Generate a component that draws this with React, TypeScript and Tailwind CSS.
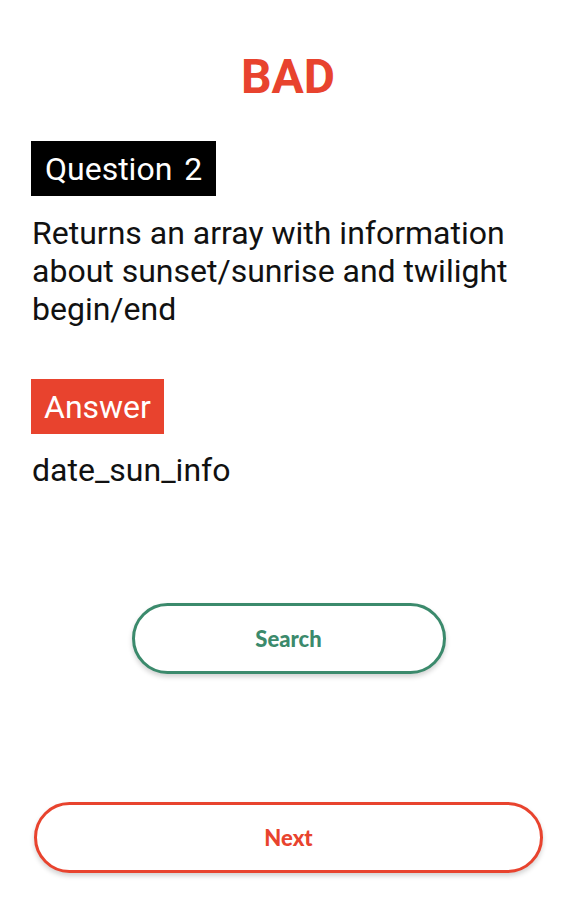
import React from "react";

export default function App() {
  return (
    <div className="w-[573px] h-[900px] bg-white flex flex-col px-[31px]" style={{ fontFamily: "Roboto, 'Liberation Sans', sans-serif" }}>
      <h1 className="pt-[49px] text-center text-[48px] leading-[56px] font-bold text-[#e8432e] pl-[3px]">BAD</h1>
      <div className="mt-[36px] self-start h-[55px] bg-black text-white text-[32px] flex items-center px-[14px] gap-[12px]">
        <span>Question</span>
        <span>2</span>
      </div>
      <p className="mt-[18px] text-[32px] leading-[38px] text-[#111] pl-[1px] pr-[4px]">
        Returns an array with information about sunset/sunrise and twilight begin/end
      </p>
      <div className="mt-[51px] self-start h-[55px] bg-[#e8432e] text-white text-[32px] flex items-center px-[13px]">
        Answer
      </div>
      <p className="mt-[17px] text-[32px] leading-[38px] text-[#111] pl-[1px]">date_sun_info</p>
      <div className="mt-[114px] flex justify-center pl-[4px]">
        <button className="w-[314px] h-[71px] rounded-full border-[3px] border-[#3b8a6c] bg-white shadow-[0_3px_5px_rgba(0,0,0,0.18)] text-[#3b8a6c] text-[22px] font-black" style={{ fontFamily: "Lato, 'Open Sans', sans-serif" }}>
          Search
        </button>
      </div>
      <div className="mt-[128px] pl-[3px]">
        <button className="w-[509px] h-[71px] rounded-full border-[3px] border-[#e8432e] bg-white shadow-[0_3px_5px_rgba(0,0,0,0.18)] text-[#e8432e] text-[22px] font-black" style={{ fontFamily: "Lato, 'Open Sans', sans-serif" }}>
          Next
        </button>
      </div>
    </div>
  );
}
